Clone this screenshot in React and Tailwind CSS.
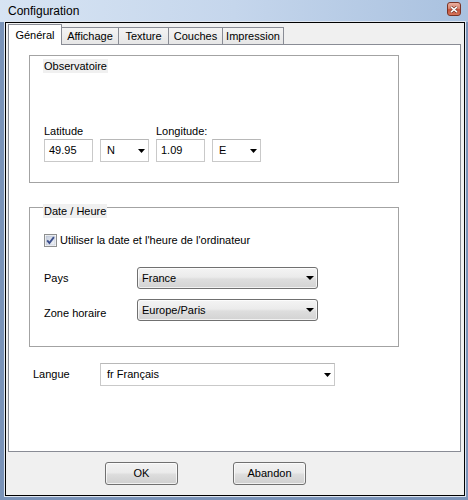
import React from 'react';

// Small black triangle used by every drop-down
const Arrow = ({ w = 7 }) => (
  <svg width={w} height="4" viewBox={`0 0 ${w} 4`} className="shrink-0">
    <polygon points={`0,0 ${w},0 ${w / 2},4`} fill="#000" />
  </svg>
);

const TextField = ({ value }) => (
  <div className="w-[49px] h-[23px] border border-[#c9c9c9] border-t-[#b8b8b8] bg-white pl-[4px] flex items-center">
    {value}
  </div>
);

const FlatSelect = ({ value, className = '' }) => (
  <div className={`h-[23px] border border-[#c9c9c9] border-t-[#b8b8b8] bg-white pl-[6px] pr-[3px] flex items-center justify-between ${className}`}>
    <span>{value}</span>
    <Arrow />
  </div>
);

const ComboBox = ({ value }) => (
  <div className="w-[181px] h-[22px] rounded-[3px] border border-[#707070] bg-[linear-gradient(#f4f4f4,#ebebeb_45%,#dedede_55%,#d3d3d3)] pl-[4px] pr-[3px] flex items-center justify-between shadow-[inset_0_0_0_1px_rgba(255,255,255,0.7)]">
    <span>{value}</span>
    <Arrow w={8} />
  </div>
);

const Button = ({ children }) => (
  <div className="w-[73px] h-[23px] rounded-[3px] border border-[#707070] bg-[linear-gradient(#f2f2f2,#ebebeb_45%,#dddddd_55%,#cfcfcf)] shadow-[inset_0_0_0_1px_rgba(255,255,255,0.7)] flex items-center justify-center">
    {children}
  </div>
);

const CheckBox = () => (
  <svg width="13" height="13" viewBox="0 0 13 13" className="shrink-0">
    <defs>
      <linearGradient id="cb" x1="0" y1="0" x2="1" y2="1">
        <stop offset="0" stopColor="#c6cedd" />
        <stop offset="1" stopColor="#f3f5f9" />
      </linearGradient>
    </defs>
    <rect x="0.5" y="0.5" width="12" height="12" fill="#fff" stroke="#8e8f8f" />
    <rect x="2" y="2" width="9" height="9" fill="url(#cb)" stroke="#b4bccb" strokeWidth="0.6" />
    <path d="M3.2 6.4 L5.4 9 L9.9 3.2" fill="none" stroke="#3c4f8c" strokeWidth="1.9" />
  </svg>
);

const CloseButton = () => (
  <div className="mt-[2px] w-[14px] h-[14px] rounded-[3px] border border-[#7a3325] bg-[linear-gradient(#eab0a1,#d98570_45%,#c4503a_55%,#d5755b)] flex items-center justify-center">
    <svg width="8" height="7" viewBox="0 0 8 7">
      <path d="M1 0.8 L7 6.2 M7 0.8 L1 6.2" stroke="#5a2418" strokeWidth="2.6" />
      <path d="M1 0.8 L7 6.2 M7 0.8 L1 6.2" stroke="#fff" strokeWidth="1.6" />
    </svg>
  </div>
);

const tabs = [
  { label: 'Affichage', w: 'w-[58px]' },
  { label: 'Texture', w: 'w-[51px]' },
  { label: 'Couches', w: 'w-[55px]' },
  { label: 'Impression', w: 'w-[62px]' },
];

export default function App() {
  return (
    <div className="w-[468px] h-[500px] bg-[#7a93b8] flex flex-col font-['Liberation_Sans',Arial,sans-serif] text-[11px] leading-[13px] text-black">
      {/* title bar */}
      <div className="h-[22px] flex items-start justify-between pl-[8px] pr-[7px] bg-[linear-gradient(90deg,#d7e4f3,#c5d6ec_50%,#a9c1df)]">
        <span className="text-[12px] leading-[22px]">Configuration</span>
        <CloseButton />
      </div>

      {/* client area */}
      <div className="ml-[5px] w-[460px] h-[474px] border border-black bg-[#f0f0f0] flex flex-col pl-[2px] pt-[1px] outline outline-1 outline-[#dfe6f0]">
        {/* tabs */}
        <div className="h-[20px] flex items-end">
          <div className="relative z-10 -mb-px w-[54px] h-[21px] border border-b-0 border-[#898c95] bg-white flex items-center justify-center">
            Général
          </div>
          {tabs.map((t) => (
            <div
              key={t.label}
              className={`-ml-px h-[17px] ${t.w} border border-b-0 border-[#898c95] bg-[linear-gradient(#f4f4f4,#e6e6e6)] flex items-center justify-center`}
            >
              {t.label}
            </div>
          ))}
        </div>

        {/* tab panel */}
        <div className="w-[453px] h-[408px] border border-[#898c95] bg-white flex flex-col pl-[20px] pt-[10px]">
          {/* Observatoire */}
          <div className="w-[370px] h-[128px] border border-[#a3a3a3] flex flex-col pl-[13px]">
            <div className="self-start mt-[3px] h-[14px] leading-[14px] px-[1px] bg-[#f0f0f0]">Observatoire</div>
            <div className="mt-[52px] pl-[1px] flex gap-[7px]">
              <div className="flex flex-col">
                <div className="h-[13px]">Latitude</div>
                <div className="mt-[1px] flex gap-[7px]">
                  <TextField value="49.95" />
                  <FlatSelect value="N" className="w-[49px]" />
                </div>
              </div>
              <div className="flex flex-col">
                <div className="h-[13px]">Longitude:</div>
                <div className="mt-[1px] flex gap-[7px]">
                  <TextField value="1.09" />
                  <FlatSelect value="E" className="w-[49px]" />
                </div>
              </div>
            </div>
          </div>

          {/* Date / Heure */}
          <div className="mt-[24px] w-[370px] h-[140px] border border-[#a3a3a3] flex flex-col pl-[13px]">
            <div className="self-start -mt-[4px] h-[14px] leading-[14px] px-[1px] bg-[#f0f0f0]">Date / Heure</div>
            <div className="mt-[16px] pl-[1px] h-[13px] flex items-center gap-[3px]">
              <CheckBox />
              <span>Utiliser la date et l'heure de l'ordinateur</span>
            </div>
            <div className="mt-[20px] pl-[1px] flex items-center">
              <span className="w-[93px]">Pays</span>
              <ComboBox value="France" />
            </div>
            <div className="mt-[10px] pl-[1px] flex items-start">
              <span className="w-[93px] pt-[8px]">Zone horaire</span>
              <ComboBox value="Europe/Paris" />
            </div>
          </div>

          {/* Langue */}
          <div className="mt-[16px] ml-[4px] flex items-center">
            <span className="w-[67px]">Langue</span>
            <FlatSelect value="fr Français" className="w-[235px] h-[22px]" />
          </div>
        </div>

        {/* buttons */}
        <div className="flex gap-[55px] pl-[97px] pt-[10px]">
          <Button>OK</Button>
          <Button>Abandon</Button>
        </div>
      </div>
    </div>
  );
}
